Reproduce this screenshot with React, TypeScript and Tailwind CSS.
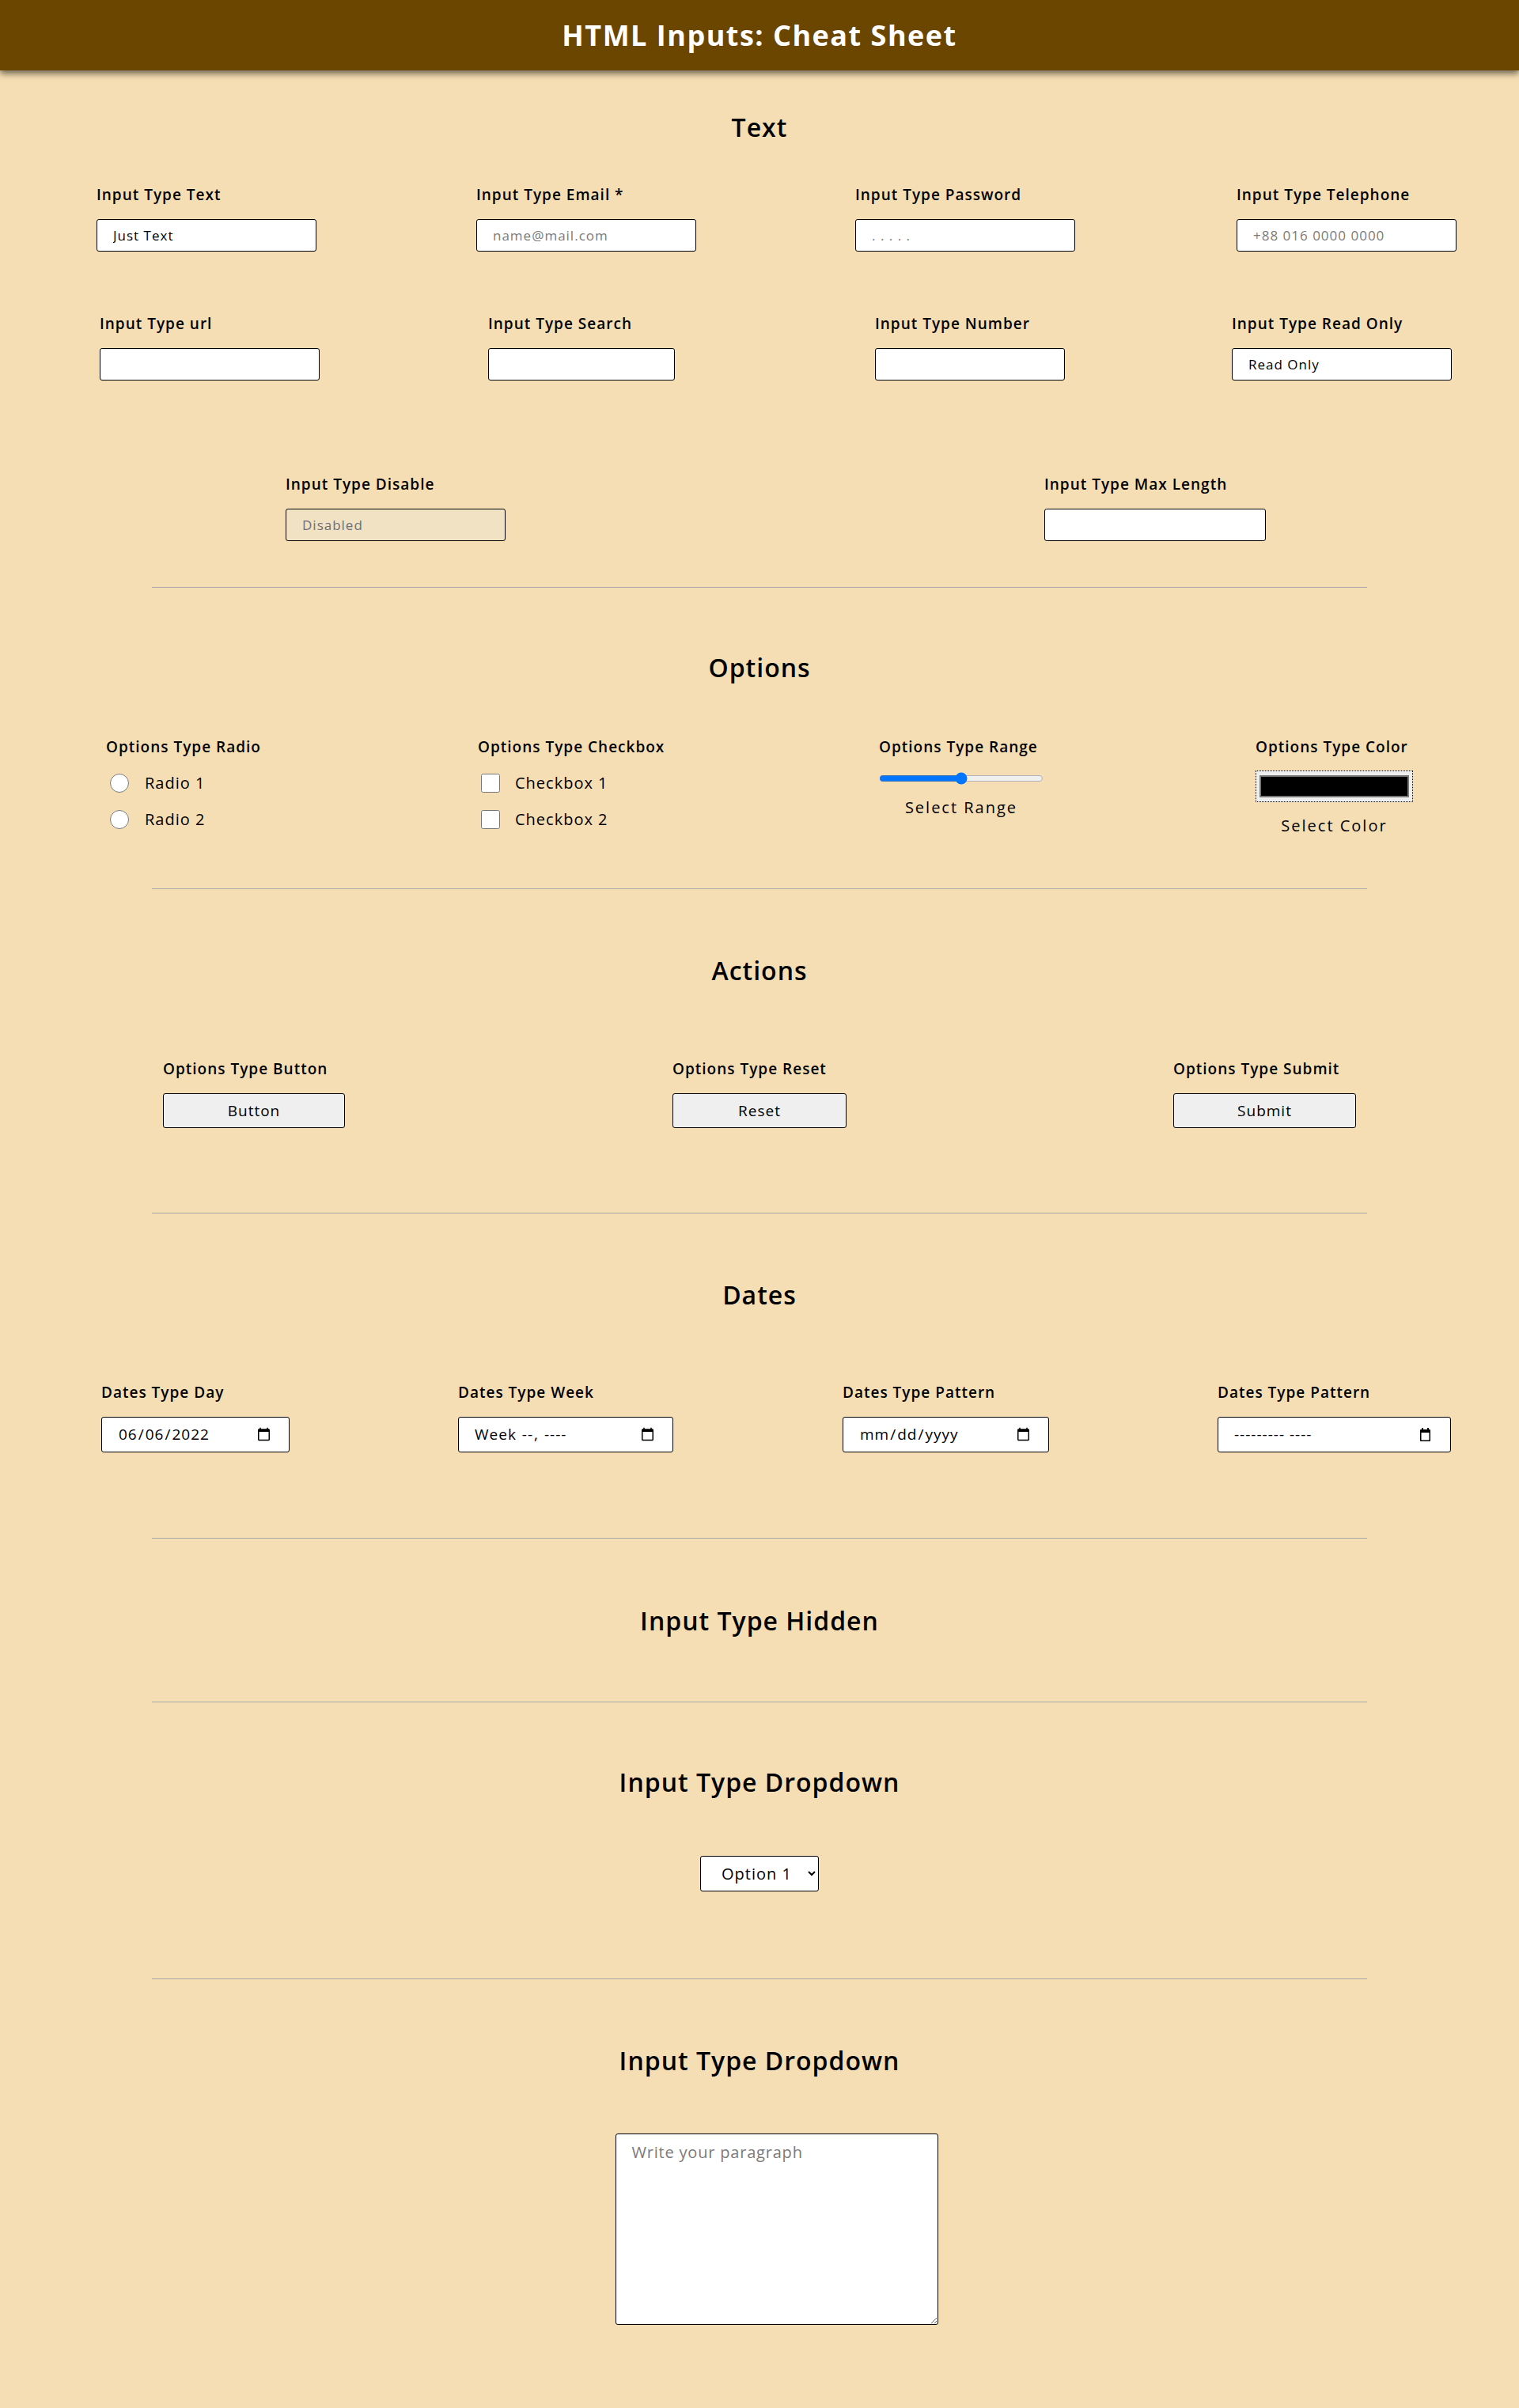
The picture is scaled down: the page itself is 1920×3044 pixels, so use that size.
import React from "react"

const font = { fontFamily: "'Open Sans', 'Noto Sans', sans-serif" }

const inputCls =
  "h-[41px] rounded-[3px] border border-black bg-white px-[20px] text-[17px] tracking-[1px] text-black placeholder:text-[#7a7a7a] outline-none"
const labelCls = "block h-[24px] text-[19px] font-semibold leading-[24px] tracking-[1px] text-black whitespace-nowrap"
const headCls = "h-[40px] text-center text-[32px] font-semibold leading-[40px] tracking-[1px] text-black"
const hrCls = "mx-auto block w-[80%] border-0 border-t border-[#a9a9a9]"
const dateCls =
  "h-[45px] rounded-[3px] border border-black bg-white px-[20px] text-[19px] tracking-[1px] text-black outline-none"

function Field({ label, w, ml, children }: { label: string; w: string; ml: string; children: React.ReactNode }) {
  return (
    <div className={`${w} ${ml} shrink-0`}>
      <label className={labelCls}>{label}</label>
      <div className="mt-[19px]">{children}</div>
    </div>
  )
}

function CalendarIcon() {
  return (
    <svg width="15" height="17" viewBox="0 0 15 17" aria-hidden="true">
      <rect x="3" y="0" width="2" height="3" fill="black" />
      <rect x="10" y="0" width="2" height="3" fill="black" />
      <rect x="1" y="2" width="13" height="15" rx="1" fill="black" />
      <rect x="2.5" y="6" width="10" height="9.5" fill="white" />
    </svg>
  )
}

export default function App() {
  return (
    <div style={font} className="min-h-[3044px] bg-[#f5deb3] pb-[105px] text-black">
      <header className="relative z-10 flex h-[89px] items-center justify-center bg-[#6b4600] shadow-[0_4px_8px_rgba(0,0,0,0.55)]">
        <h1 className="text-[36px] font-bold tracking-[1.5px] text-white">HTML Inputs: Cheat Sheet</h1>
      </header>

      {/* Text */}
      <h2 className={`${headCls} mt-[52px]`}>Text</h2>
      <div className="mt-[53px] flex">
        <Field label="Input Type Text" w="w-[278px]" ml="ml-[122px]">
          <input type="text" defaultValue="Just Text" className={`${inputCls} w-[278px]`} />
        </Field>
        <Field label="Input Type Email *" w="w-[278px]" ml="ml-[202px]">
          <input type="email" placeholder="name@mail.com" className={`${inputCls} w-[278px]`} />
        </Field>
        <Field label="Input Type Password" w="w-[278px]" ml="ml-[201px]">
          <input type="text" placeholder=". . . . ." className={`${inputCls} w-[278px]`} />
        </Field>
        <Field label="Input Type Telephone" w="w-[278px]" ml="ml-[204px]">
          <input type="tel" placeholder="+88 016 0000 0000" className={`${inputCls} w-[278px]`} />
        </Field>
      </div>
      <div className="mt-[79px] flex">
        <Field label="Input Type url" w="w-[278px]" ml="ml-[126px]">
          <input type="url" className={`${inputCls} w-[278px]`} />
        </Field>
        <Field label="Input Type Search" w="w-[236px]" ml="ml-[213px]">
          <input type="search" className={`${inputCls} w-[236px]`} />
        </Field>
        <Field label="Input Type Number" w="w-[240px]" ml="ml-[253px]">
          <input type="text" inputMode="numeric" className={`${inputCls} w-[240px]`} />
        </Field>
        <Field label="Input Type Read Only" w="w-[278px]" ml="ml-[211px]">
          <input type="text" readOnly defaultValue="Read Only" className={`${inputCls} w-[278px]`} />
        </Field>
      </div>
      <div className="mt-[119px] flex">
        <Field label="Input Type Disable" w="w-[278px]" ml="ml-[361px]">
          <input
            type="text"
            disabled
            placeholder="Disabled"
            className="h-[41px] w-[278px] rounded-[3px] border border-black bg-[#f2e2c4] px-[20px] text-[17px] tracking-[1px] placeholder:text-[#6a6f78]"
          />
        </Field>
        <Field label="Input Type Max Length" w="w-[280px]" ml="ml-[681px]">
          <input type="text" maxLength={10} className={`${inputCls} w-[280px]`} />
        </Field>
      </div>
      <hr className={`${hrCls} mt-[58px]`} />

      {/* Options */}
      <h2 className={`${headCls} mt-[81px]`}>Options</h2>
      <div className="mt-[68px] flex h-[191px] items-start">
        <div className="ml-[134px] w-[240px] shrink-0">
          <label className={labelCls}>Options Type Radio</label>
          <div className="mt-[22px] flex flex-col gap-[22px]">
            {["Radio 1", "Radio 2"].map((r) => (
              <label key={r} className="flex h-[24px] items-center text-[20px] leading-[24px] tracking-[1px]">
                <input type="radio" name="radio" className="ml-[5px] h-[24px] w-[24px]" />
                <span className="ml-[20px]">{r}</span>
              </label>
            ))}
          </div>
        </div>
        <div className="ml-[230px] w-[260px] shrink-0">
          <label className={labelCls}>Options Type Checkbox</label>
          <div className="mt-[22px] flex flex-col gap-[22px]">
            {["Checkbox 1", "Checkbox 2"].map((r) => (
              <label key={r} className="flex h-[24px] items-center text-[20px] leading-[24px] tracking-[1px]">
                <input type="checkbox" className="ml-[4px] h-[24px] w-[24px]" />
                <span className="ml-[19px]">{r}</span>
              </label>
            ))}
          </div>
        </div>
        <div className="ml-[247px] flex w-[208px] shrink-0 flex-col items-center">
          <label className={`${labelCls} self-start`}>Options Type Range</label>
          <input type="range" defaultValue={50} className="mt-[20px] h-[16px] w-[208px] accent-[#0075ff]" />
          <span className="mt-[15px] text-[20px] leading-[28px] tracking-[2px]">Select Range</span>
        </div>
        <div className="ml-[268px] flex w-[199px] shrink-0 flex-col items-center">
          <label className={`${labelCls} self-start`}>Options Type Color</label>
          <div className="mt-[18px] flex h-[40px] w-[199px] items-center border border-dotted border-black bg-[#efefef] px-[4px]">
            <div className="h-[28px] w-full border-2 border-[#777] bg-black" />
          </div>
          <span className="mt-[16px] text-[20px] leading-[28px] tracking-[2px]">Select Color</span>
        </div>
      </div>
      <hr className={hrCls} />

      {/* Actions */}
      <h2 className={`${headCls} mt-[83px]`}>Actions</h2>
      <div className="mt-[92px] flex">
        {[
          { l: "Options Type Button", b: "Button", w: "w-[230px]", ml: "ml-[206px]" },
          { l: "Options Type Reset", b: "Reset", w: "w-[220px]", ml: "ml-[414px]" },
          { l: "Options Type Submit", b: "Submit", w: "w-[231px]", ml: "ml-[413px]" },
        ].map((a) => (
          <div key={a.b} className={`${a.w} ${a.ml} shrink-0`}>
            <label className={labelCls}>{a.l}</label>
            <button
              type="button"
              className={`${a.w} mt-[19px] h-[44px] rounded-[3px] border border-black bg-[#efefef] text-[19px] tracking-[1px]`}
            >
              {a.b}
            </button>
          </div>
        ))}
      </div>
      <hr className={`${hrCls} mt-[107px]`} />

      {/* Dates */}
      <h2 className={`${headCls} mt-[83px]`}>Dates</h2>
      <div className="mt-[91px] flex">
        <Field label="Dates Type Day" w="w-[238px]" ml="ml-[128px]">
          <input type="date" defaultValue="2022-06-06" className={`${dateCls} w-[238px] text-[#555]`} />
        </Field>
        <Field label="Dates Type Week" w="w-[272px]" ml="ml-[213px]">
          <input type="week" className={`${dateCls} w-[272px]`} />
        </Field>
        <Field label="Dates Type Pattern" w="w-[261px]" ml="ml-[214px]">
          <input type="date" className={`${dateCls} w-[261px]`} />
        </Field>
        <Field label="Dates Type Pattern" w="w-[295px]" ml="ml-[213px]">
          <div className={`${dateCls} flex w-[295px] items-center justify-between pr-[24px]`}>
            <span>--------- ----</span>
            <CalendarIcon />
          </div>
        </Field>
      </div>
      <hr className={`${hrCls} mt-[108px]`} />

      <h2 className={`${headCls} mt-[84px]`}>Input Type Hidden</h2>
      <input type="hidden" value="secret" />
      <hr className={`${hrCls} mt-[82px]`} />

      <h2 className={`${headCls} mt-[81px]`}>Input Type Dropdown</h2>
      <div className="mt-[73px] flex justify-center">
        <select className="h-[45px] w-[150px] rounded-[3px] border border-black bg-white pl-[22px] text-[20px] tracking-[1px] text-black">
          <option>Option 1</option>
          <option>Option 2</option>
          <option>Option 3</option>
        </select>
      </div>
      <hr className={`${hrCls} mt-[110px]`} />

      <h2 className={`${headCls} mt-[83px]`}>Input Type Dropdown</h2>
      <div className="mt-[72px] flex justify-center">
        <textarea
          placeholder="Write your paragraph"
          className="ml-[43px] h-[242px] w-[408px] rounded-[3px] border border-black bg-white px-[20px] pt-[8px] text-[20px] tracking-[0.8px] placeholder:text-[#7a7a7a]"
        />
      </div>
    </div>
  )
}
